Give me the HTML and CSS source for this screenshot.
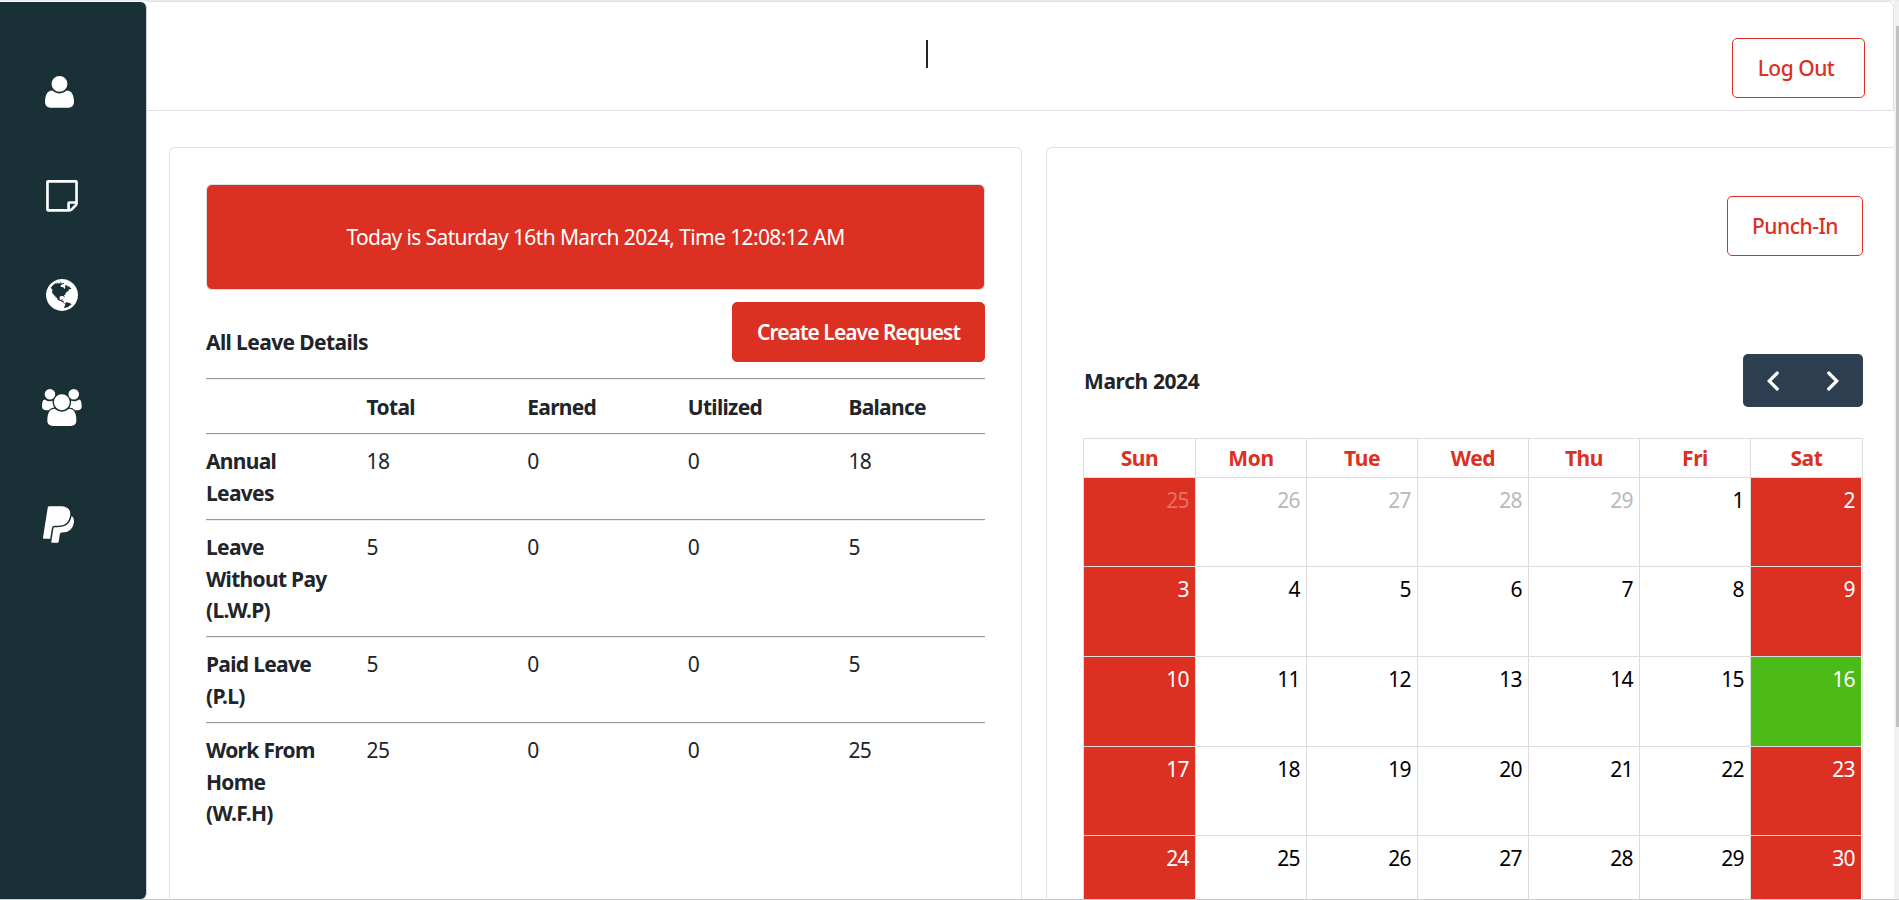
FILE: index.html
```html
<!DOCTYPE html>
<html lang="en">
<head>
<meta charset="utf-8">
<title>Leave Dashboard</title>
<link rel="stylesheet" href="styles.css">
</head>
<body>
<div class="app">
  <nav class="sidebar">
    <svg class="icon icon-user" viewBox="192 128 1408 1536"><path d="M1600 1405q0 120-73 189.5t-194 69.5h-874q-121 0-194-69.500t-73-189.500q0-53 3.500-103.500t14-109 26.500-108.500 43-97.500 62-81 85.500-53.500 111.500-20q9 0 42 21.500t74.500 48 108 48 133.500 21.500 133.500-21.500 108-48 74.500-48 42-21.500q61 0 111.500 20t85.500 53.500 62 81 43 97.500 26.500 108.500 14 109 3.500 103.500zm-320-893q0 159-112.500 271.500t-271.500 112.500-271.500-112.500-112.500-271.500 112.500-271.500 271.500-112.500 271.500 112.500 112.500 271.500z"/></svg>
    <svg class="icon icon-note" viewBox="0 128 1536 1536"><path fill-rule="evenodd" d="M96 128h1344q40 0 68 28t28 68v1024q0 40-20 88t-48 76l-184 184q-28 28-76 48t-88 20h-1024q-40 0-68-28t-28-68v-1344q0-40 28-68t68-28zM1400 1280h-248v248q29-10 41-22l185-185q12-12 22-41zM128 256h1280v896h-288q-40 0-68 28t-28 68v288h-896z"/></svg>
    <svg class="icon icon-globe" viewBox="128 128 1536 1536"><path d="M896 128q209 0 385.500 103t279.500 279.500 103 385.500-103 385.500-279.500 279.500-385.500 103-385.500-103-279.500-279.500-103-385.500 103-385.500 279.500-279.500 385.500-103zm274 521q-2 1-9.500 9.500t-13.500 9.500q2 0 4.500-5t5-11 3.500-7q6-7 22-15 14-6 52-12 34-8 51 11-2-2 9.500-13t14.500-12q3-2 15-4.500t15-7.500l2-22q-12 1-17.500-7t-6.500-21q0 2-6 8 0-7-4.500-8t-11.500 1-9 1q-10-3-15-7.500t-8-16.500-4-15q-2-5-9.500-11t-9.500-10q-1-2-2.500-5.500t-3-6.500-4-5.500-5.500-2.500-7 5-7.500 10-4.500 5q-3-2-6-1.500t-4.500 1-4.500 3-5 3.500q-3 2-8.500 3t-8.500 2q15-5-1-11-10-4-16-3 9-4 7.500-12t-8.500-14h5q-1-4-8.500-8.500t-17.500-8.500-13-6q-8-5-34-9.500t-33-.5q-5 6-4.500 10.500t4 14 3.500 12.500q1 6-5.500 13t-6.500 12q0 7 14 15.500t10 21.500q-3 8-16 16t-16 12q-5 8-1.500 18.500t10.500 16.500q2 2 1.500 4t-3.500 4.500-5.500 4-6.500 3.500l-3 2q-11 5-20.500-6t-13.500-26q-7-25-16-30-23-8-29 1-5-13-41-26-25-9-58-4 6-1 0-15-7-15-19-12 3-6 4-17.500t1-13.500q3-13 12-23 1-1 7-8.500t9.500-13.500.5-6q35 4 50-11 5-5 11.500-17t10.500-17q9-6 14-5.500t14.500 5.500 14.500 5q14 1 15.500-11t-7.500-20q12 1 3-17-4-7-8-9-12-4-27 5-8 4 2 8-1-1-9.500 10.500t-16.500 17.500-16-5q-1-1-5.500-13.500t-9.500-13.500q-8 0-16 15 3-8-11-15t-24-8q19-12-8-27-7-4-20.500-5t-19.500 4q-5 7-5.500 11.500t5 8 10.500 5.500 11.500 4 8.500 3q14 10 8 14-2 1-8.500 3.500t-11.500 4.500-6 4q-3 4 0 14t-2 14q-5-5-9-17.500t-7-16.500q7 9-25 6l-10-1q-4 0-16 2t-20.500 1-13.500-8q-4-8 0-20 1-4 4-2-4-3-11-9.500t-10-8.500q-46 15-94 41 6 1 12-1 5-2 13-6.500t10-5.500q34-14 42-7l5-5q14 16 20 25-7-4-30-1-20 6-22 12 7 12 5 18-4-3-11.500-10t-14.500-11-15-5q-16 0-22 1-146 80-235 222 7 7 12 8 4 1 5 9t2.500 11 11.500-3q9 8 3 19 1-1 44 27 19 17 21 21 3 11-10 18-1-2-9-9t-9-4q-3 5 .5 18.500t10.500 12.500q-7 0-9.500 16t-2.500 35.500-1 23.500l2 1q-3 12 5.500 34.500t21.500 19.500q-13 3 20 43 6 8 8 9 3 2 12 7.500t15 10 10 10.500q4 5 10 22.500t14 23.500q-2 6 9.500 20t10.500 23q-1 0-2.500 1t-2.500 1q3 7 15.500 14t15.500 13q1 3 2 10t3 11 8 2q2-20-24-62-15-25-17-29-3-5-5.500-15.500t-4.500-14.500q2 0 6 1.500t8.500 3.500 7.500 4 2 3q-3 7 2 17.500t12 18.500 17 19 12 13q6 6 14 19.500t0 13.500q9 0 20 10.500t17 19.500q5 8 8 26t5 24q2 7 8.500 13.500t12.500 9.500l16 8 13 7q5 2 18.500 10.500t21.500 11.500q10 4 16 4t14.500-2.500 13.500-3.500q15-2 29 15t21 21q36 19 55 11-2 1 .5 7.500t8 15.500 9 14.500 5.500 8.500q5 6 18 15t18 15q6-4 7-9-3 8 7 20t18 10q14-3 14-32-31 15-49-18 0-1-2.500-5.500t-4-8.500-2.500-8.500 0-7.500 5-3q9 0 10-3.500t-2-12.500-4-13q-1-8-11-20t-12-15q-5 9-16 8t-16-9q0 1-1.500 5.500t-1.500 6.500q-13 0-15-1 1-3 2.500-17.500t3.500-22.500q1-4 5.500-12t7.500-14.500 4-12.500-4.500-9.500-17.500-2.500q-19 1-26 20-1 3-3 10.500t-5 11.500-9 7q-7 3-24 2t-24-5q-13-8-22.500-29t-9.500-37q0-10 2.500-26.500t3-25-5.500-24.500q3-2 9-9.500t10-10.500q2-1 4.500-1.500t4.500 0 4-1.500 3-6q-1-1-4-3-3-3-4-3 7 3 28.500-1.500t27.500 1.500q15 11 22-2 0-1-2.500-9.500t-.5-13.500q5 27 29 9 3 3 15.500 5t17.500 5q3 2 7 5.500t5.500 4.500 5-.5 8.500-6.500q10 14 12 24 11 40 19 44 7 3 11 2t4.500-9.500 0-14-1.500-12.500l-1-8v-18l-1-8q-15-3-18.500-12t1.500-18.500 15-18.500q1-1 8-3.500t15.500-6.500 12.500-8q21-19 15-35 7 0 11-9-1 0-5-3t-7.500-5-4.500-2q9-5 2-16 5-3 7.500-11t7.500-10q9 12 21 2 7-8 1-16 5-7 20.500-10.500t18.500-9.500q7 2 8-2t1-12 3-12q4-5 15-9t13-5l17-11q3-4 0-4 18 2 31-11 10-11-6-20 3-6-3-9.500t-15-5.500q3-1 11.500-.5t10.500-1.500q15-10-7-16-17-5-43 12zm-163 877q206-36 351-189-3-3-12.500-4.500t-12.500-3.500q-18-7-24-8 1-7-2.500-13t-8-9-12.500-8-11-7q-2-2-7-6t-7-5.500-7.500-4.500-8.500-2-10 1l-3 1q-3 1-5.500 2.500t-5.500 3-4 3 0 2.500q-21-17-36-22-5-1-11-5.500t-10.500-7-10-1.500-11.500 7q-5 5-6 15t-2 13q-7-5 0-17.500t2-18.500q-3-6-10.500-4.500t-12 4.500-11.500 8.500-9 6.500-8.500 5.500-8.500 7.500q-3 4-6 12t-5 11q-2-4-11.500-6.500t-9.500-5.500q2 10 4 35t5 38q7 31-12 48-27 25-29 40-4 22 12 26 0 7-8 20.500t-7 21.500q0 6 2 16z"/></svg>
    <svg class="icon icon-users" viewBox="64 0 1920 1792"><path d="M657 896q-162 5-265 128h-134q-82 0-138-40.500t-56-118.500q0-353 124-353 6 0 43.500 21t97.500 42.500 119 21.500q67 0 133-23-5 37-5 66 0 139 81 256zm1071 637q0 120-73 189.500t-194 69.500h-874q-121 0-194-69.500t-73-189.500q0-53 3.500-103.500t14-109 26.500-108.500 43-97.500 62-81 85.500-53.500 111.500-20q10 0 43 21.500t73 48 107 48 135 21.500 135-21.500 107-48 73-48 43-21.500q61 0 111.500 20t85.500 53.500 62 81 43 97.500 26.500 108.500 14 109 3.500 103.500zm-1024-1277q0 106-75 181t-181 75-181-75-75-181 75-181 181-75 181 75 75 181zm704 384q0 159-112.500 271.500t-271.500 112.500-271.500-112.500-112.500-271.500 112.500-271.500 271.500-112.500 271.500 112.500 112.500 271.500zm576 225q0 78-56 118.500t-138 40.500h-134q-103-123-265-128 81-117 81-256 0-29-5-66 66 23 133 23 59 0 119-21.500t97.500-42.500 43.500-21q124 0 124 353zm-128-609q0 106-75 181t-181 75-181-75-75-181 75-181 181-75 181 75 75 181z"/></svg>
    <svg class="icon icon-paypal" viewBox="136 0 1520 1792"><path d="M1647 646q18 84-4 204-87 444-565 444h-44q-25 0-44 16.500t-24 42.500l-4 19-55 346-2 15q-5 26-24.500 42.500t-44.500 16.500h-251q-21 0-33-15t-9-36q9-56 26.500-168t26.500-168 27-167.500 27-167.500q5-37 43-37h131q133 2 236-21 175-39 287-144 102-95 155-246 24-70 35-133 1-6 2.500-7.500t3.500-1 6 3.500q79 59 98 162zm-172-282q0 107-46 236-80 233-302 315-113 40-252 42 0 1-90 1l-90-1q-100 0-118 96-2 8-85 530-1 10-12 10h-295q-22 0-36.500-16.500t-11.500-38.500l232-1471q5-29 27.500-48t51.500-19h598q34 0 97.500 13t111.500 32q107 41 163.500 123t56.500 196z"/></svg>
  </nav>
  <div class="page">
    <header class="topbar">
      <span class="caret"></span>
      <button class="btn btn-outline btn-logout">Log Out</button>
    </header>
    <main class="columns">
      <section class="card leave">
        <div class="banner">Today is Saturday 16th March 2024, Time 12:08:12 AM</div>
        <div class="leave-head">
          <h2 class="title">All Leave Details</h2>
          <button class="btn btn-solid">Create Leave Request</button>
        </div>
        <div class="row row-head"><b></b><b>Total</b><b>Earned</b><b>Utilized</b><b>Balance</b></div>
        <div class="row"><b>Annual<br>Leaves</b><span>18</span><span>0</span><span>0</span><span>18</span></div>
        <div class="row row-tall"><b>Leave<br>Without Pay<br>(L.W.P)</b><span>5</span><span>0</span><span>0</span><span>5</span></div>
        <div class="row"><b>Paid Leave<br>(P.L)</b><span>5</span><span>0</span><span>0</span><span>5</span></div>
        <div class="row row-tall"><b>Work From<br>Home<br>(W.F.H)</b><span>25</span><span>0</span><span>0</span><span>25</span></div>
      </section>
      <section class="card month">
        <button class="btn btn-outline btn-punch">Punch-In</button>
        <div class="month-head">
          <h2 class="title">March 2024</h2>
          <div class="pager">
            <svg class="chevron" viewBox="0 0 12 20"><path d="M10.300 2 2.200 10l8.100 8"/></svg>
            <svg class="chevron" viewBox="0 0 12 20"><path d="M1.700 2l8.100 8-8.100 8"/></svg>
          </div>
        </div>
        <div class="calendar">
          <b>Sun</b><b>Mon</b><b>Tue</b><b>Wed</b><b>Thu</b><b>Fri</b><b>Sat</b>
          <span class="off faded">25</span><span class="faded">26</span><span class="faded">27</span><span class="faded">28</span><span class="faded">29</span><span>1</span><span class="off last">2</span>
          <span class="off">3</span><span>4</span><span>5</span><span>6</span><span>7</span><span>8</span><span class="off last">9</span>
          <span class="off">10</span><span>11</span><span>12</span><span>13</span><span>14</span><span>15</span><span class="off last today">16</span>
          <span class="off">17</span><span>18</span><span>19</span><span>20</span><span>21</span><span>22</span><span class="off last">23</span>
          <span class="off">24</span><span>25</span><span>26</span><span>27</span><span>28</span><span>29</span><span class="off last">30</span>
        </div>
      </section>
    </main>
  </div>
  <div class="scrollbar"><div class="thumb"></div></div>
</div>
</body>
</html>
```
FILE: styles.css
```css
* { box-sizing: border-box; }
html, body { height: 100%; }
body {
  margin: 0;
  overflow: hidden;
  font-family: "Noto Sans", "Open Sans", sans-serif;
  font-size: 21px;
  line-height: 31.6px;
  letter-spacing: -0.62px;
  color: #212529;
  background: #fff;
}
.app {
  display: flex;
  height: 900px;
  border-top: 1px solid #e9ebef;
  border-bottom: 1px solid #ccc;
}
.sidebar {
  flex: none;
  display: flex;
  flex-direction: column;
  width: 147px;
  margin-top: 1px;
  background: #1a3037;
  border-right: 1px solid #c9ced3;
  border-radius: 0 6px 6px 0;
}
.icon { display: block; flex: none; fill: #fff; }
.icon-user { width: 29px; height: 31.7px; margin: 74px 0 0 45px; }
.icon-note { width: 32px; height: 31.7px; margin: 72.6px 0 0 46px; }
.icon-globe { width: 32px; height: 32px; margin: 67px 0 0 46px; }
.icon-users { width: 39.7px; height: 37px; margin: 77.7px 0 0 42px; }
.icon-paypal { width: 31px; height: 37px; margin: 80px 0 0 43px; }

.page {
  flex: 1;
  min-width: 0;
  display: flex;
  flex-direction: column;
}
.topbar {
  flex: none;
  display: flex;
  justify-content: space-between;
  align-items: flex-start;
  height: 110px;
  padding: 37px 28px 0 779px;
  border: 1px solid #dee2e6;
  border-left: 0;
  border-radius: 0 6px 0 0;
}
.caret { width: 2px; height: 28px; margin-top: 1px; background: #212529; }

.btn {
  display: flex;
  align-items: center;
  justify-content: center;
  height: 60px;
  padding: 1px 0 0;
  font: inherit;
  font-weight: 500;
  border: 1px solid #dc3023;
  border-radius: 5px;
}
.btn-outline { color: #dc3023; background: #fff; letter-spacing: -0.5px; }
.btn-solid { width: 253px; color: #fff; background: #dc3023; font-weight: 600; letter-spacing: -0.93px; }
.btn-logout { width: 133px; margin-top: -1px; padding-right: 5px; }
.btn-punch { width: 136px; margin-left: auto; }

.columns { flex: 1; min-height: 0; display: flex; gap: 24px; padding: 36px 0 0 22px; overflow: hidden; }
.card { border: 1px solid #dfe1e5; border-bottom: 0; overflow: hidden; }
.leave { flex: none; width: 853px; padding: 36px 36px 0; border-radius: 6px 6px 0 0; }
.month { flex: 1; min-width: 0; padding: 48px 31px 0 36px; border-right: 0; border-radius: 6px 0 0 0; }
.banner {
  display: flex;
  align-items: center;
  justify-content: center;
  height: 106px;
  padding-top: 2px;
  color: #fff;
  background: #dc3023;
  border: 1px solid #dbe0e6;
  border-radius: 6px;
}
.leave-head { display: flex; justify-content: space-between; height: 88px; padding-top: 12px; }
.title { margin: 0; font-size: inherit; font-weight: 700; letter-spacing: -0.6px; }
.leave-head .title { margin-top: 25px; }

.row {
  display: grid;
  grid-template-columns: repeat(5, 160.6px);
  height: 86px;
  padding-top: 12px;
  border-top: 1px solid #999;
  box-shadow: inset 0 1px #eee;
}
.row b { letter-spacing: -0.7px; }
.row-head { height: 55px; padding-top: 13px; }
.row-tall { height: 117px; }

.month-head { display: flex; justify-content: space-between; height: 84px; margin-top: 98px; }
.month-head .title { margin: 12px 0 0 1px; letter-spacing: -0.4px; }
.pager {
  display: flex;
  align-items: center;
  justify-content: space-between;
  width: 120px;
  height: 53px;
  padding: 1px 24px 0;
  border-radius: 5px;
  background: #2c3e50;
}
.chevron {
  width: 12px;
  height: 20px;
  fill: none;
  stroke: #fff;
  stroke-width: 3.2px;
  stroke-linecap: round;
}
.calendar {
  display: grid;
  grid-template-columns: 112px repeat(5, 111px) 112px;
  grid-template-rows: 39px 89px 90px 90px 89px 90px;
  width: 780px;
  border-right: 1px solid #ddd;
}
.calendar > * { border: 1px solid #ddd; border-width: 1px 0 0 1px; }
.calendar b { padding-top: 4px; text-align: center; color: #dc3023; letter-spacing: -0.4px; }
.calendar span { padding: 7px 6px 0 0; text-align: right; color: #000; }
.calendar .faded { color: #b9b9b9; }
.calendar .off { color: #fff; background: #dc3023; }
.calendar .off.faded { color: #e77067; }
.calendar .last { padding-right: 7px; box-shadow: inset -1px 0 #fff; }
.calendar .today { background: #4cbb17; }

.scrollbar { flex: none; width: 5px; padding: 25px 0 0 2px; background: #f1f1f1; }
.thumb { height: 701px; background: #c1c1c1; }
```
